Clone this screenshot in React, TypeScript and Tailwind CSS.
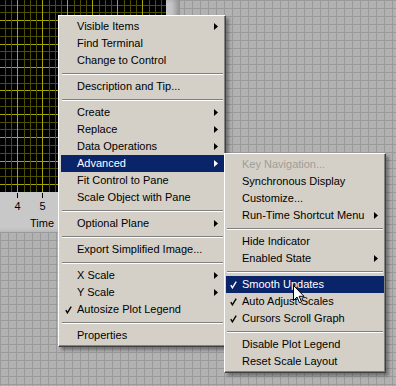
import React from 'react';

// TYPES
type MenuRow =
  | 'sep'
  | {
      label: string;
      arrow?: boolean;
      check?: boolean;
      active?: boolean;
      disabled?: boolean;
    };

const MAIN_MENU: MenuRow[] = [
  { label: 'Visible Items', arrow: true },
  { label: 'Find Terminal' },
  { label: 'Change to Control' },
  'sep',
  { label: 'Description and Tip...' },
  'sep',
  { label: 'Create', arrow: true },
  { label: 'Replace', arrow: true },
  { label: 'Data Operations', arrow: true },
  { label: 'Advanced', arrow: true, active: true },
  { label: 'Fit Control to Pane' },
  { label: 'Scale Object with Pane' },
  'sep',
  { label: 'Optional Plane', arrow: true },
  'sep',
  { label: 'Export Simplified Image...' },
  'sep',
  { label: 'X Scale', arrow: true },
  { label: 'Y Scale', arrow: true },
  { label: 'Autosize Plot Legend', check: true },
  'sep',
  { label: 'Properties' },
];

const SUB_MENU: MenuRow[] = [
  { label: 'Key Navigation...', disabled: true },
  { label: 'Synchronous Display' },
  { label: 'Customize...' },
  { label: 'Run-Time Shortcut Menu', arrow: true },
  'sep',
  { label: 'Hide Indicator' },
  { label: 'Enabled State', arrow: true },
  'sep',
  { label: 'Smooth Updates', check: true, active: true },
  { label: 'Auto Adjust Scales', check: true },
  { label: 'Cursors Scroll Graph', check: true },
  'sep',
  { label: 'Disable Plot Legend' },
  { label: 'Reset Scale Layout' },
];

// ICONS
const Check = ({ color }: { color: string }) => (
  <svg width="7" height="8" viewBox="0 0 7 8">
    <path d="M0.8 4.2 L2.4 6.8 L6.2 0.6" fill="none" stroke={color} strokeWidth="1.4" />
  </svg>
);

const Arrow = ({ color }: { color: string }) => (
  <svg width="4" height="7" viewBox="0 0 4 7" className="ml-auto">
    <polygon points="0,0 4,3.5 0,7" fill={color} />
  </svg>
);

const Cursor = () => (
  <svg width="12" height="19" viewBox="0 0 12 19" className="absolute left-[293px] top-[285px]">
    <path
      d="M0.5 0.5 L0.5 15.5 L4 12 L6.5 17.8 L8.6 16.9 L6.2 11.3 L11 11.3 Z"
      fill="#fff"
      stroke="#000"
      strokeWidth="1"
    />
  </svg>
);

// MARKUP
const Menu = ({ rows, className }: { rows: MenuRow[]; className: string }) => (
  <div
    className={`absolute flex flex-col border border-t-white border-l-white border-r-[#404040] border-b-[#404040] bg-[#d4d0c8] py-[2px] shadow-[inset_-1px_-1px_0_#808080,3px_3px_3px_rgba(0,0,0,0.35)] ${className}`}
  >
    {rows.map((row, i) =>
      row === 'sep' ? (
        <div key={i} className="flex h-[9px] items-center px-[1px]">
          <div className="h-[2px] w-full border-t border-t-[#808080] border-b border-b-white" />
        </div>
      ) : (
        <div
          key={i}
          className={`flex h-[17px] items-center pl-[4px] pr-[6px] ${
            row.active ? 'bg-[#0a246a] text-white' : row.disabled ? 'text-[#a19d95]' : 'text-black'
          }`}
        >
          <span className="flex w-[12px] items-center">
            {row.check && <Check color={row.active ? '#fff' : '#000'} />}
          </span>
          <span className="whitespace-nowrap">{row.label}</span>
          {row.arrow && <Arrow color={row.active ? '#fff' : '#000'} />}
        </div>
      ),
    )}
  </div>
);

const PlotGrid = () => {
  const verticals = Array.from({ length: 28 }, (_, i) => i * 6.25 - 1.5);
  const horizontals = Array.from({ length: 26 }, (_, i) => i * 7.8 + 4.5);
  return (
    <svg width="166" height="192" className="block bg-black">
      {horizontals.map((y, i) => (
        <line
          key={`h${i}`}
          x1="0"
          x2="166"
          y1={Math.round(y) + 0.5}
          y2={Math.round(y) + 0.5}
          stroke={i % 3 === 2 ? '#a6a600' : '#4e4e00'}
        />
      ))}
      {verticals.map((x, i) => (
        <line
          key={`v${i}`}
          y1="0"
          y2="192"
          x1={Math.round(x) + 0.5}
          x2={Math.round(x) + 0.5}
          stroke={i % 4 === 3 ? '#a6a600' : '#4e4e00'}
        />
      ))}
    </svg>
  );
};

const Graph = () => (
  <div className="absolute left-0 top-0 flex h-[232px] w-[180px] flex-col bg-[#c8c8c8] shadow-[inset_-6px_0_6px_-2px_#8a8a8a]">
    <PlotGrid />
    <div className="flex w-[166px] flex-col text-[11px] text-black">
      <div className="flex pl-[5px] pt-[1px]">
        {['4', '5'].map((n) => (
          <div key={n} className="flex w-[25px] flex-col items-center gap-[3px]">
            <div className="h-[5px] w-px bg-black" />
            <span>{n}</span>
          </div>
        ))}
      </div>
      <span className="pl-[30px] pt-[6px]">Time</span>
    </div>
  </div>
);

export default function App() {
  return (
    <div
      className="relative h-[386px] w-[396px] overflow-hidden bg-[#b2b2b2] bg-[linear-gradient(to_right,#9a9a9a_1px,transparent_1px),linear-gradient(to_bottom,#9a9a9a_1px,transparent_1px)] bg-[size:8px_8px] text-[11px] leading-none"
      style={{ fontFamily: '"Liberation Sans", Arial, sans-serif' }}
    >
      <Graph />
      <Menu rows={MAIN_MENU} className="left-[58px] top-[15px] w-[168px] pl-[2px] pr-[1px]" />
      <Menu rows={SUB_MENU} className="left-[224px] top-[153px] w-[162px] pl-[1px] pr-[1px]" />
      <Cursor />
    </div>
  );
}
